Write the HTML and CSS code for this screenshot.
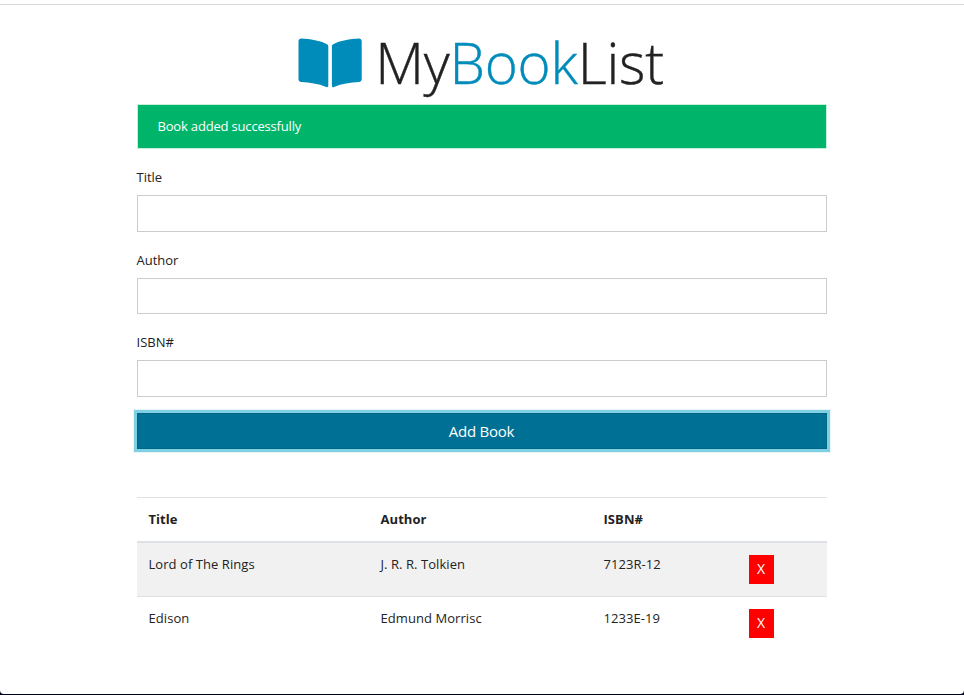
FILE: index.html
```html
<!DOCTYPE html>
<html lang="en">
<head>
<meta charset="utf-8">
<title>MyBookList</title>
<link rel="stylesheet" href="styles.css">
</head>
<body>
<div class="page">
  <main class="container">
    <h1 class="brand">
      <svg class="brand-icon" viewBox="0 0 64 50" aria-hidden="true">
        <path d="M0.5 3.2C0.5 1.3 1.8 0.3 3.6 0.4C11.8 0.9 22.5 2.4 29 6.2C30 6.8 30.3 7.3 30.3 8.3V47.8C30.3 49 29.4 49.5 28.2 49C20.5 45.6 11.5 44.5 3.5 44C1.7 43.9 0.5 42.9 0.5 41.3Z"/>
        <path d="M63.7 3.2C63.7 1.3 62.4 0.3 60.6 0.4C52.4 0.9 41.7 2.4 35.2 6.2C34.2 6.8 33.9 7.3 33.9 8.3V47.8C33.9 49 34.8 49.5 36 49C43.7 45.6 52.7 44.5 60.7 44C62.5 43.9 63.7 42.9 63.7 41.3Z"/>
      </svg>
      <span class="brand-name">My<span class="brand-accent">Book</span>List</span>
    </h1>
    <div class="alert">Book added successfully</div>
    <form class="book-form">
      <label for="title">Title</label>
      <input id="title" type="text">
      <label for="author">Author</label>
      <input id="author" class="compact" type="text">
      <label for="isbn">ISBN#</label>
      <input id="isbn" type="text">
      <button class="submit" type="button">Add Book</button>
    </form>
    <table class="books">
      <colgroup><col class="col-title"><col class="col-author"><col class="col-isbn"><col></colgroup>
      <thead>
        <tr><th>Title</th><th>Author</th><th>ISBN#</th><th></th></tr>
      </thead>
      <tbody>
        <tr><td>Lord of The Rings</td><td>J. R. R. Tolkien</td><td>7123R-12</td><td><a class="delete">X</a></td></tr>
        <tr><td>Edison</td><td>Edmund Morrisc</td><td>1233E-19</td><td><a class="delete">X</a></td></tr>
      </tbody>
    </table>
  </main>
</div>
</body>
</html>
```
FILE: styles.css
```css
* { box-sizing: border-box; }
html { background: #02021a; }
body {
  margin: 0;
  font: 13px/20px "Open Sans", sans-serif;
  color: #222;
}
.page {
  height: 694px;
  padding-top: 4px;
  background: #fff;
  border-radius: 0 0 4px 4px;
  overflow: hidden;
}
.page::before {
  content: "";
  display: block;
  height: 1px;
  background: #d9d9de;
}
.container { width: 690px; margin: 0 auto; }
.brand {
  display: flex;
  justify-content: center;
  align-items: flex-start;
  gap: 13px;
  height: 99px;
  margin: 0;
  padding: 33px 2px 0 0;
  font-size: 56.5px;
  font-weight: 300;
  line-height: 50px;
  letter-spacing: -0.2px;
}
.brand-icon { width: 64px; height: 50px; fill: #008cba; }
.brand-name { white-space: nowrap; -webkit-text-stroke: 0.4px; }
.brand-accent { color: #008cba; }
.alert {
  height: 45px;
  padding: 11px 19.5px;
  border: 1px solid #c8efdc;
  background: #00b56a;
  color: #fff;
  letter-spacing: -0.18px;
}
.book-form { display: flex; flex-direction: column; padding-top: 18px; }
.book-form label { height: 28px; margin-left: -0.5px; }
.book-form input {
  height: 37px;
  margin-bottom: 18px;
  border: 1px solid #ccc;
  background: #fff;
}
.book-form .compact { height: 36px; }
.book-form #isbn { margin-bottom: 16px; }
.submit {
  height: 36px;
  padding: 0 1px 0 0;
  border: 1px solid #006687;
  background: #007095;
  color: #fff;
  font: 15px/34px "Open Sans", sans-serif;
  letter-spacing: -0.25px;
  box-shadow: 0 0 0 3px #7fd0e3, 0 0 0 4px #e8f5f9;
}
.books {
  width: 100%;
  margin-top: 48px;
  table-layout: fixed;
  border-collapse: separate;
  border-spacing: 0;
}
.col-title { width: 232px; }
.col-author { width: 223px; }
.col-isbn { width: 145px; }
.books th, .books td {
  padding: 11px 0 0 11.5px;
  border-top: 1px solid #dee2e6;
  text-align: left;
  vertical-align: top;
  letter-spacing: 0.06px;
}
.books th { height: 46px; border-bottom: 2px solid #dee2e6; }
.books td { height: 54px; }
.books tbody tr:first-child td { height: 53px; border-top: 0; background: #f1f1f1; }
.delete {
  display: block;
  width: 25px;
  height: 29px;
  margin-top: 1px;
  background: #f00;
  color: #fff;
  font-size: 14px;
  line-height: 28px;
  text-align: center;
}
```
